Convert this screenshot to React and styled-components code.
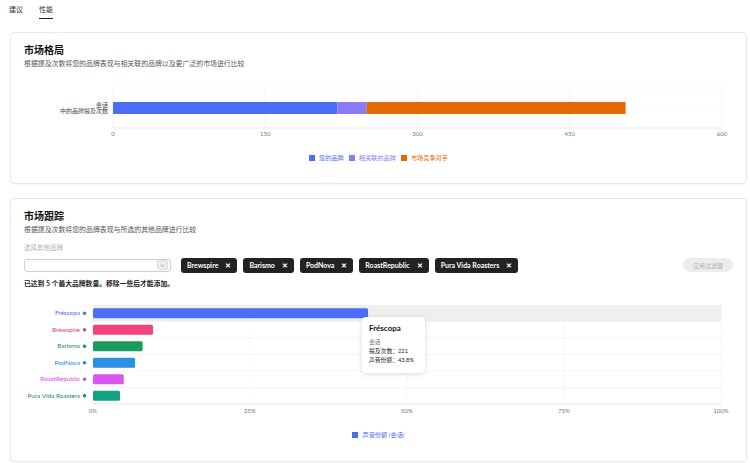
import React from "react";
import styled, { createGlobalStyle } from "styled-components";

const GlobalStyle = createGlobalStyle`
  body {
    margin: 0;
    background: #ffffff;
    font-family: "Lato", "Noto Sans CJK SC", sans-serif;
    color: #1f1f1f;
  }
`;

const Page = styled.div`
  width: 750px;
  height: 463px;
  overflow: hidden;
`;

const Tabs = styled.div`
  display: flex;
  gap: 16px;
  padding: 4px 0 0 9px;
  height: 20px;
  margin-bottom: 8px;
`;

const Tab = styled.div`
  font-size: 7px;
  line-height: 10px;
  height: 14px;
  color: #333;
  border-bottom: ${({ active }) => (active ? "1.5px solid #222" : "none")};
`;

const Card = styled.section`
  margin: 0 3px 14px 10px;
  border: 1px solid #e9e9e9;
  border-radius: 4px;
  background: #fff;
  box-shadow: 0 1px 2px rgba(0, 0, 0, 0.04);
  padding: 10px 13px ${({ bottom }) => bottom}px;
`;

const CardTitle = styled.h2`
  margin: 0;
  font-size: 10px;
  line-height: 14px;
  font-weight: 700;
  color: #111;
`;

const CardSubtitle = styled.p`
  margin: 1px 0 0;
  font-size: 6.9px;
  line-height: 10px;
  color: #555;
`;

const ChartSvg = styled.svg`
  display: block;
  margin-top: ${({ top }) => top}px;
  overflow: visible;
  font-family: "Lato", "Noto Sans CJK SC", sans-serif;
`;

const Legend = styled.div`
  display: flex;
  justify-content: center;
  gap: 5px;
  margin-top: ${({ top }) => top}px;
  height: 10px;
`;

const LegendItem = styled.div`
  display: flex;
  align-items: center;
  gap: 4px;
  font-size: 6.2px;
  line-height: 10px;
  color: ${({ color }) => color};
`;

const Swatch = styled.span`
  width: 6px;
  height: 6px;
  background: ${({ color }) => color};
`;

const FieldLabel = styled.div`
  margin-top: 9px;
  font-size: 6.5px;
  line-height: 10px;
  color: #b5b5b5;
`;

const FilterRow = styled.div`
  display: flex;
  align-items: center;
  margin-top: 4px;
  height: 16px;
`;

const SelectBox = styled.div`
  width: 147px;
  height: 13px;
  box-sizing: border-box;
  border: 1px solid #cfcfcf;
  border-radius: 3px;
  display: flex;
  align-items: center;
  justify-content: flex-end;
  padding-right: 2px;
  margin-right: 10px;
`;

const Caret = styled.span`
  width: 9px;
  height: 8px;
  border: 1px solid #dcdcdc;
  background: #ececec;
  border-radius: 2px;
  display: flex;
  align-items: center;
  justify-content: center;
`;

const Chips = styled.div`
  display: flex;
  gap: 6px;
`;

const Chip = styled.div`
  height: 15px;
  display: flex;
  align-items: center;
  gap: 7px;
  padding: 0 6px;
  background: #222;
  border-radius: 3px;
  color: #fff;
  font-size: 7px;
  font-weight: 700;
`;

const ChipClose = styled.span`
  font-size: 7px;
  line-height: 1;
`;

const ApplyButton = styled.button`
  margin-left: auto;
  width: 50px;
  height: 14px;
  border: none;
  border-radius: 7px;
  background: #ececec;
  color: #b3b3b3;
  font-family: "Noto Sans CJK SC", sans-serif;
  font-size: 6px;
  padding: 0;
`;

const Notice = styled.div`
  margin-top: 5px;
  font-size: 6.8px;
  line-height: 10px;
  font-weight: 700;
  color: #222;
`;

const ChartWrap = styled.div`
  position: relative;
`;

const Tooltip = styled.div`
  position: absolute;
  left: 338px;
  top: 21px;
  width: 63px;
  height: 56px;
  box-sizing: border-box;
  padding: 6px 7px;
  background: #fff;
  border-radius: 4px;
  box-shadow: 0 1px 5px rgba(0, 0, 0, 0.16);
`;

const TipTitle = styled.div`
  font-size: 8px;
  font-weight: 700;
  line-height: 10px;
  color: #111;
  margin-bottom: 4px;
`;

const TipLine = styled.div`
  font-size: 5.8px;
  line-height: 9px;
  color: ${({ muted }) => (muted ? "#777" : "#222")};
`;

const landscape = [
  { label: "您的品牌", value: 221, color: "#4c6ef5" },
  { label: "相关联的品牌", value: 29, color: "#8b7cf6" },
  { label: "市场竞争对手", value: 255, color: "#e56b00" },
];

const brands = [
  { name: "Fréscopa", share: 43.8, color: "#4c6ef5", text: "#4c6ef5" },
  { name: "Brewspire", share: 9.55, color: "#f2437d", text: "#e23b73" },
  { name: "Barismo", share: 7.9, color: "#1b9a5c", text: "#1f8a57" },
  { name: "PodNova", share: 6.7, color: "#2b8fe6", text: "#2b82d8" },
  { name: "RoastRepublic", share: 4.9, color: "#d957ef", text: "#cf4fe6" },
  { name: "Pura Vida Roasters", share: 4.3, color: "#14a083", text: "#1b8a66" },
];

const LandscapeChart = () => {
  const x0 = 89;
  const w = 609;
  const scale = w / 600;
  let acc = 0;
  return (
    <ChartSvg top={12} width="711" height="58">
      <rect x={x0} y={8} width={w} height={40} fill="#fff" />
      {[0, 150, 300, 450, 600].map((t) => (
        <line key={t} x1={x0 + t * scale} x2={x0 + t * scale} y1={8} y2={48} stroke="#f0f0f0" strokeWidth="0.8" />
      ))}
      <line x1={x0} x2={x0 + w} y1={8} y2={8} stroke="#f2f2f2" strokeWidth="0.8" />
      <line x1={x0} x2={x0 + w} y1={28} y2={28} stroke="#f2f2f2" strokeWidth="0.8" strokeDasharray="3 2" />
      <line x1={x0} x2={x0 + w} y1={48} y2={48} stroke="#e4e4e4" strokeWidth="0.8" />
      {landscape.map((s) => {
        const x = x0 + acc * scale;
        acc += s.value;
        return <rect key={s.label} x={x} y={22} width={s.value * scale} height={12} fill={s.color} />;
      })}
      <text x={84} y={27} textAnchor="end" fontSize="6" fill="#444">会话</text>
      <text x={84} y={33} textAnchor="end" fontSize="6" fill="#444">中的品牌提及次数</text>
      {[0, 150, 300, 450, 600].map((t) => (
        <text key={t} x={x0 + t * scale} y={56} textAnchor="middle" fontSize="6" fill="#777">{t}</text>
      ))}
    </ChartSvg>
  );
};

const TrackingChart = () => {
  const x0 = 69;
  const w = 628;
  const top = 9;
  const rowH = 16.5;
  const bottom = top + rowH * brands.length;
  return (
    <ChartWrap>
      <ChartSvg top={8} width="711" height="122">
        <rect x={x0} y={top} width={w} height={rowH} fill="#efefef" />
        {brands.map((b, i) => (
          <line key={b.name} x1={x0} x2={x0 + w} y1={top + rowH * (i + 1)} y2={top + rowH * (i + 1)} stroke="#f3f3f3" strokeWidth="0.8" />
        ))}
        {[0, 25, 50, 75, 100].map((t) => (
          <line key={t} x1={x0 + (t / 100) * w} x2={x0 + (t / 100) * w} y1={top} y2={bottom} stroke="#eeeeee" strokeWidth="0.8" strokeDasharray="2 2" />
        ))}
        <line x1={x0} x2={x0 + w} y1={bottom} y2={bottom} stroke="#e4e4e4" strokeWidth="0.8" />
        {brands.map((b, i) => {
          const cy = top + rowH * i + rowH / 2;
          return (
            <g key={b.name}>
              <rect x={x0} y={cy - 5} width={(b.share / 100) * w} height={10} rx="1.5" fill={b.color} />
              <text x={56} y={cy + 2.1} textAnchor="end" fontSize="6.4" fill={b.text}>{b.name}</text>
              <circle cx={60.5} cy={cy} r={1.7} fill={b.text} />
            </g>
          );
        })}
        {[0, 25, 50, 75, 100].map((t) => (
          <text key={t} x={x0 + (t / 100) * w} y={117} textAnchor="middle" fontSize="6" fill="#777">{t}%</text>
        ))}
      </ChartSvg>
      <Tooltip>
        <TipTitle>Fréscopa</TipTitle>
        <TipLine muted>会话</TipLine>
        <TipLine>提及次数：221</TipLine>
        <TipLine>声音份额：43.8%</TipLine>
      </Tooltip>
    </ChartWrap>
  );
};

const App = () => {
  return (
    <Page>
      <GlobalStyle />
      <Tabs>
        <Tab>建议</Tab>
        <Tab active>性能</Tab>
      </Tabs>

      <Card bottom={20}>
        <CardTitle>市场格局</CardTitle>
        <CardSubtitle>根据提及次数将您的品牌表现与相关联的品牌以及更广泛的市场进行比较</CardSubtitle>
        <LandscapeChart />
        <Legend top={15}>
          {landscape.map((s) => (
            <LegendItem key={s.label} color={s.color}>
              <Swatch color={s.color} />
              {s.label}
            </LegendItem>
          ))}
        </Legend>
      </Card>

      <Card bottom={21}>
        <CardTitle>市场跟踪</CardTitle>
        <CardSubtitle>根据提及次数将您的品牌表现与所选的其他品牌进行比较</CardSubtitle>
        <FieldLabel>选择其他品牌</FieldLabel>
        <FilterRow>
          <SelectBox>
            <Caret>
              <svg width="5" height="3" viewBox="0 0 5 3">
                <path d="M0.5 0.5L2.5 2.5L4.5 0.5" stroke="#aaa" strokeWidth="0.8" fill="none" />
              </svg>
            </Caret>
          </SelectBox>
          <Chips>
            {brands.slice(1).map((b) => (
              <Chip key={b.name}>
                {b.name}
                <ChipClose>✕</ChipClose>
              </Chip>
            ))}
          </Chips>
          <ApplyButton>应用过滤器</ApplyButton>
        </FilterRow>
        <Notice>已达到 5 个最大品牌数量。移除一些后才能添加。</Notice>
        <TrackingChart />
        <Legend top={12}>
          <LegendItem color="#4c6ef5">
            <Swatch color="#4c6ef5" />
            声音份额 (会话)
          </LegendItem>
        </Legend>
      </Card>
    </Page>
  );
};

export default App;
